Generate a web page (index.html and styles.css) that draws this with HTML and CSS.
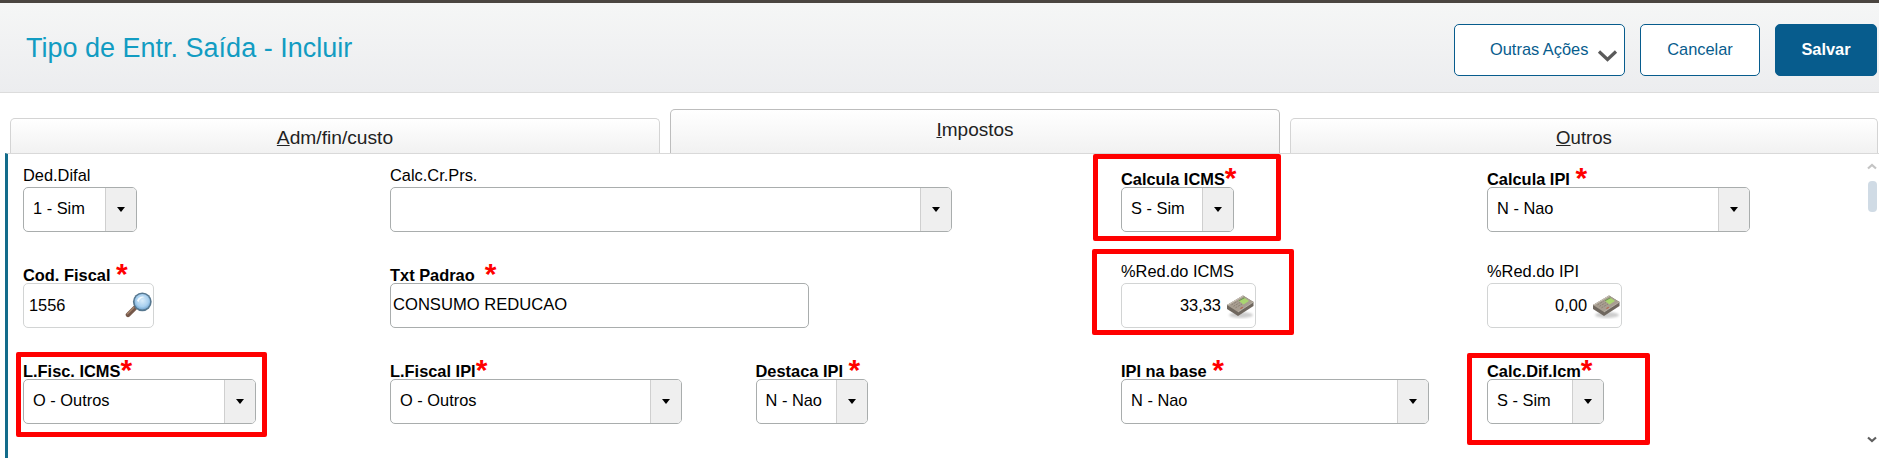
FILE: index.html
```html
<!DOCTYPE html>
<html lang="pt-BR">
<head>
<meta charset="utf-8">
<title>Tipo de Entr. Saída - Incluir</title>
<link rel="stylesheet" href="styles.css">
</head>
<body>
<svg class="defs" width="0" height="0" aria-hidden="true">
  <defs>
    <filter id="soft"><feGaussianBlur stdDeviation="1.2"/></filter>
    <radialGradient id="lens" cx=".5" cy=".42" r=".6">
      <stop offset="0" stop-color="#d9ecfa"/>
      <stop offset=".65" stop-color="#a9d0ef"/>
      <stop offset="1" stop-color="#6fa3cf"/>
    </radialGradient>
    <symbol id="lupa" viewBox="0 0 27 26">
      <path d="M3 22.800 10 15.800" stroke="#75584a" stroke-width="4.600" stroke-linecap="round" fill="none"/>
      <path d="M2.500 21.800 8.800 15.500" stroke="#a98870" stroke-width="1.200" stroke-linecap="round" fill="none"/>
      <circle cx="17.300" cy="9.800" r="9.400" fill="#56778f"/>
      <circle cx="17.300" cy="9.800" r="7.800" fill="url(#lens)"/>
      <path d="M12 8.500a5.600 5.600 0 0 1 8-3.400c-2.600.3-5.200 1.500-6.600 5.200z" fill="#f2f9fe"/>
    </symbol>
    <symbol id="calc" viewBox="0 0 28 24">
      <ellipse cx="15" cy="20" rx="12" ry="3" fill="#cdcdcd" filter="url(#soft)"/>
      <path d="M1 10 17 .5 27.500 7v4L12 21 1 14z" fill="#6f675e"/>
      <path d="M1 10 17 .5 27.500 7 12 17z" fill="#a89e91"/>
      <path d="M1.800 10 17 1" stroke="#d5cfc5" stroke-width=".8" fill="none"/>
      <path d="M12.500 5.500 18 2.500 23 6 17.500 9.500z" fill="#a9d66f"/>
      <path d="M12.500 5.500 18 2.500l.9.600-5.400 3z" fill="#6f8a5c"/>
      <path d="M5.500 9.800 11.500 6.300M7.500 11.300 14 7.500M9.500 12.800 16 9" stroke="#8b8175" stroke-width="1" stroke-dasharray="2 1" fill="none"/>
      <path d="M14.500 13.600l2.200-1.400" stroke="#b5604a" stroke-width="1.100"/>
      <path d="M12 17 27.500 7" stroke="#c9c2b8" stroke-width=".7" fill="none"/>
    </symbol>
  </defs>
</svg>

<header class="topbar">
  <h1 class="title">Tipo de Entr. Saída - Incluir</h1>
  <div class="actions">
    <button class="btn btn-more" type="button">
      <span>Outras Ações</span>
      <svg class="chev" width="21" height="13" viewBox="0 0 21 13"><path d="M2 2.500 10.500 10.500 19 2.500" fill="none" stroke="#5a5a5a" stroke-width="3.200"/></svg>
    </button>
    <button class="btn btn-cancel" type="button">Cancelar</button>
    <button class="btn btn-save" type="button">Salvar</button>
  </div>
</header>

<nav class="tabs">
  <div class="tab tab-adm"><span><u>A</u>dm/fin/custo</span></div>
  <div class="tab tab-imp"><span><u>I</u>mpostos</span></div>
  <div class="tab tab-out"><span><u>O</u>utros</span></div>
</nav>

<main class="panel">
  <div class="form">
    <div class="field">
      <label class="lbl">Ded.Difal</label>
      <div class="combo w-114"><span class="val">1 - Sim</span><span class="arrow"></span></div>
    </div>
    <div class="field span-2">
      <label class="lbl">Calc.Cr.Prs.</label>
      <div class="combo w-562"><span class="val"></span><span class="arrow"></span></div>
    </div>
    <div class="field">
      <label class="lbl strong">Calcula ICMS<b class="req">*</b></label>
      <div class="combo w-113"><span class="val">S - Sim</span><span class="arrow"></span></div>
    </div>
    <div class="field">
      <label class="lbl strong">Calcula IPI <b class="req gap">*</b></label>
      <div class="combo w-263"><span class="val">N - Nao</span><span class="arrow"></span></div>
    </div>

    <div class="field">
      <label class="lbl strong">Cod. Fiscal <b class="req gap">*</b></label>
      <div class="box light w-131"><span class="txt code">1556</span><svg class="ico-lupa" width="27" height="26"><use href="#lupa"/></svg></div>
    </div>
    <div class="field span-2">
      <label class="lbl strong">Txt Padrao&nbsp; <b class="req gap">*</b></label>
      <div class="box w-419"><span class="txt tight">CONSUMO REDUCAO</span></div>
    </div>
    <div class="field">
      <label class="lbl">%Red.do ICMS</label>
      <div class="box light w-135"><span class="txt num">33,33</span><svg class="ico-calc" width="28" height="24"><use href="#calc"/></svg></div>
    </div>
    <div class="field">
      <label class="lbl">%Red.do IPI</label>
      <div class="box light w-135"><span class="txt num">0,00</span><svg class="ico-calc" width="28" height="24"><use href="#calc"/></svg></div>
    </div>

    <div class="field">
      <label class="lbl strong">L.Fisc. ICMS<b class="req">*</b></label>
      <div class="combo w-233"><span class="val">O - Outros</span><span class="arrow"></span></div>
    </div>
    <div class="field">
      <label class="lbl strong">L.Fiscal IPI<b class="req">*</b></label>
      <div class="combo w-292"><span class="val">O - Outros</span><span class="arrow"></span></div>
    </div>
    <div class="field">
      <label class="lbl strong">Destaca IPI <b class="req gap">*</b></label>
      <div class="combo w-112"><span class="val">N - Nao</span><span class="arrow"></span></div>
    </div>
    <div class="field">
      <label class="lbl strong">IPI na base <b class="req gap">*</b></label>
      <div class="combo w-308"><span class="val">N - Nao</span><span class="arrow"></span></div>
    </div>
    <div class="field">
      <label class="lbl strong">Calc.Dif.Icm<b class="req">*</b></label>
      <div class="combo w-117"><span class="val">S - Sim</span><span class="arrow"></span></div>
    </div>
  </div>

  <div class="scroll">
    <svg class="sc-arrow" width="10" height="7" viewBox="0 0 10 7"><path d="M1 5.500 5 2l4 3.500" fill="none" stroke="#c4c4c4" stroke-width="2.200"/></svg>
    <div class="thumb"></div>
    <svg class="sc-arrow sc-down" width="10" height="7" viewBox="0 0 10 7"><path d="M1 1.500 5 5l4-3.500" fill="none" stroke="#5f5f5f" stroke-width="2.200"/></svg>
  </div>
</main>

<div class="mark mark-1"></div>
<div class="mark mark-2"></div>
<div class="mark mark-3"></div>
<div class="mark mark-4"></div>
</body>
</html>
```

FILE: styles.css
```css
* { box-sizing: border-box; }

html, body {
  margin: 0;
  height: 458px;
  overflow: hidden;
  background: #fff;
  font-family: "Liberation Sans", Arial, sans-serif;
  color: #000;
}

.defs { position: absolute; }

.topbar {
  height: 93px;
  border-top: 3px solid #4a4540;
  border-bottom: 1px solid #dcdcdc;
  background: linear-gradient(#f5f6f6, #ecedef);
  display: flex;
  align-items: flex-start;
  justify-content: space-between;
  padding: 21px 2px 0 26px;
}

.title {
  margin: 8px 0 0;
  font-size: 27px;
  line-height: 32px;
  font-weight: 400;
  color: #129cc2;
}

.actions { display: flex; gap: 15px; }

.btn {
  height: 52px;
  border: 1px solid #075c8d;
  border-radius: 5px;
  background: #fff;
  color: #075c8d;
  font: 400 16.4px "Liberation Sans", Arial, sans-serif;
  padding: 0 0 2px;
}

.btn-more {
  width: 171px;
  display: flex;
  align-items: center;
  padding-left: 35px;
  gap: 9px;
}
.chev { margin-top: 12px; }
.btn-cancel { width: 120px; }
.btn-save {
  width: 102px;
  background: #075c8d;
  color: #fff;
  font-weight: 700;
}

.tabs {
  height: 61px;
  margin-bottom: -1px;
  display: flex;
  align-items: flex-end;
  padding-left: 10px;
  gap: 10px;
}

.tab {
  height: 36px;
  border: 1px solid #d4d4d4;
  border-bottom: 0;
  border-radius: 5px 5px 0 0;
  background: linear-gradient(#ffffff, #f1f1f1);
  display: flex;
  align-items: center;
  justify-content: center;
  padding-top: 3px;
  font-size: 18.6px;
  color: #222;
}
.tab-adm { width: 650px; font-size: 19.2px; }
.tab-imp { width: 610px; height: 45px; border-color: #bdbdbd; padding: 0 0 4px; font-size: 19px; }
.tab-out { width: 588px; }

.panel {
  position: relative;
  height: 305px;
  margin-left: 5px;
  border-left: 3px solid #136c8b;
  border-top: 1px solid #d9d9d9;
  background: #fff;
  padding: 14px 0 0 15px;
}

.form {
  display: grid;
  grid-template-columns: 367px 365.5px 365.5px 366px 1fr;
  grid-auto-rows: 64px;
  row-gap: 32px;
}

.span-2 { grid-column: span 2; }

.field { display: flex; flex-direction: column; }

.lbl {
  height: 19px;
  margin-top: -2px;
  margin-bottom: 2px;
  font-size: 16.4px;
  line-height: 19px;
  white-space: nowrap;
}
.strong {
  margin-top: 0;
  margin-bottom: 0;
  font-weight: 700;
}

.req {
  color: #f00;
  font-size: 30px;
  line-height: 19px;
  font-weight: 700;
  vertical-align: -3px;
}
.req.gap { margin-left: 1px; }

.combo, .box {
  height: 45px;
  border: 1px solid #a9adad;
  border-radius: 5px;
  display: flex;
  align-items: center;
  padding-bottom: 3px;
  font-size: 16.4px;
  background: #fff;
}
.box { padding-bottom: 1px; }

.val { flex: 1; padding-left: 9px; }

.arrow {
  width: 31px;
  align-self: stretch;
  margin-bottom: -3px;
  background: #efefef;
  border-left: 1px solid #cfcfcf;
  border-radius: 0 4px 4px 0;
  display: flex;
  align-items: center;
  justify-content: center;
}
.arrow::before {
  content: "";
  border-left: 4.5px solid transparent;
  border-right: 4.5px solid transparent;
  border-top: 5px solid #000;
}

.box.light { border-color: #d2d4d4; }
.txt { flex: 1; padding-left: 9px; }
.txt.code { padding-left: 5px; }
.txt.tight { padding-left: 2px; font-size: 16.6px; }
.num { text-align: right; padding: 0 5px 0 0; }
.ico-lupa { margin-right: 1px; }
.ico-calc { margin: 3px 1px 0 0; }

.w-112 { width: 112px; }
.w-113 { width: 113px; }
.w-114 { width: 114px; }
.w-117 { width: 117px; }
.w-131 { width: 131px; }
.w-135 { width: 135px; }
.w-233 { width: 233px; }
.w-263 { width: 263px; }
.w-292 { width: 292px; }
.w-308 { width: 308px; }
.w-419 { width: 419px; }
.w-562 { width: 562px; }

.scroll {
  position: absolute;
  top: 9px;
  right: 2px;
  width: 10px;
  height: 280px;
  display: flex;
  flex-direction: column;
  align-items: center;
}
.thumb {
  width: 9px;
  height: 31px;
  margin-top: 11px;
  border-radius: 4px;
  background: #d0dbe5;
}
.sc-down { margin-top: auto; }

.mark {
  position: absolute;
  border: 5px solid #f00;
  border-radius: 2px;
}
.mark-1 { left: 1093px; top: 154px; width: 188px; height: 87px; }
.mark-2 { left: 1092px; top: 249px; width: 202px; height: 86px; }
.mark-3 { left: 16px; top: 352px; width: 251px; height: 85px; }
.mark-4 { left: 1467px; top: 353px; width: 183px; height: 92px; }
```
